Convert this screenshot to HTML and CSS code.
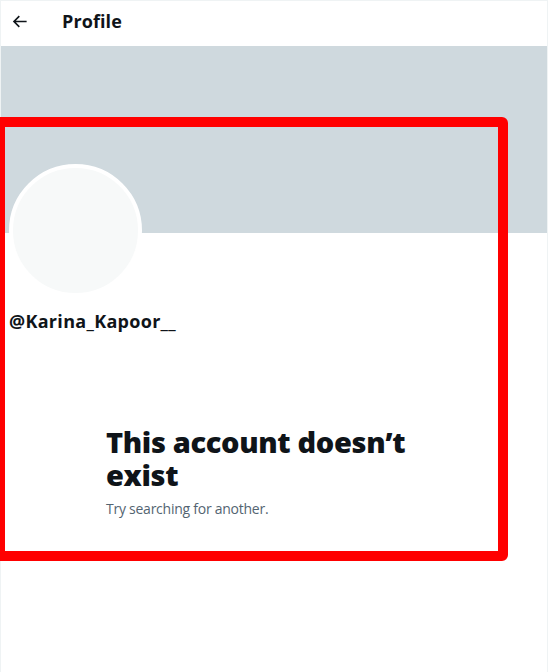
FILE: index.html
```html
<!DOCTYPE html>
<html lang="en">
<head>
<meta charset="utf-8">
<title>Profile</title>
<link rel="stylesheet" href="styles.css">
</head>
<body>
<div class="page">
  <header class="topbar">
    <button class="back" aria-label="Back">
      <svg viewBox="0 0 24 24" width="19" height="19"><path d="M7.414 13l5.043 5.04-1.414 1.42L3.586 12l7.457-7.46 1.414 1.42L7.414 11H21v2H7.414z" fill="#0f1419"/></svg>
    </button>
    <h1 class="title">Profile</h1>
  </header>
  <div class="banner"></div>
  <div class="profile">
    <div class="avatar"></div>
    <div class="handle">@Karina_Kapoor__</div>
  </div>
  <div class="empty">
    <h2 class="empty-title">This account doesn’t exist</h2>
    <p class="empty-sub">Try searching for another.</p>
  </div>
</div>
<div class="highlight"></div>
</body>
</html>
```
FILE: styles.css
```css
html, body {
  margin: 0;
  padding: 0;
  background: #fff;
}
body {
  font-family: "Open Sans", "Noto Sans", "Liberation Sans", sans-serif;
  color: #0f1419;
  overflow: hidden;
}
.page {
  width: 548px;
  height: 672px;
  border-top: 1px solid #eff3f4;
  border-left: 1px solid #eff3f4;
  border-right: 1px solid #eff3f4;
  box-sizing: border-box;
}
.topbar {
  height: 45px;
  display: flex;
  align-items: flex-start;
  padding-left: 8px;
  padding-top: 8px;
  box-sizing: border-box;
}
.back {
  width: 20px;
  height: 24px;
  padding: 0;
  border: 0;
  background: none;
  display: flex;
  align-items: center;
  justify-content: center;
  margin-right: 33px;
}
.title {
  margin: 0;
  font-size: 18px;
  font-weight: 700;
  line-height: 24px;
  letter-spacing: 0.1px;
}
.banner {
  height: 187px;
  background: #cfd9de;
}
.profile {
  padding-left: 8px;
}
.avatar {
  width: 125px;
  height: 125px;
  border-radius: 50%;
  border: 4px solid #fff;
  background: #f7f9f9;
  margin-top: -69px;
}
.handle {
  margin-top: 12px;
  font-size: 18px;
  font-weight: 700;
  line-height: 24px;
  letter-spacing: 0.3px;
}
.empty {
  margin-top: 92px;
  padding-left: 105px;
}
.empty-title {
  margin: 0;
  font-size: 29px;
  font-weight: 800;
  line-height: 33px;
  letter-spacing: -0.35px;
  width: 330px;
}
.empty-sub {
  margin: 8px 0 0;
  font-size: 14px;
  line-height: 20px;
  letter-spacing: -0.25px;
  color: #536471;
}
.highlight {
  position: absolute;
  left: -5px;
  top: 117px;
  width: 513px;
  height: 444px;
  box-sizing: border-box;
  border: 10px solid #ff0000;
  border-radius: 6px;
}
```
